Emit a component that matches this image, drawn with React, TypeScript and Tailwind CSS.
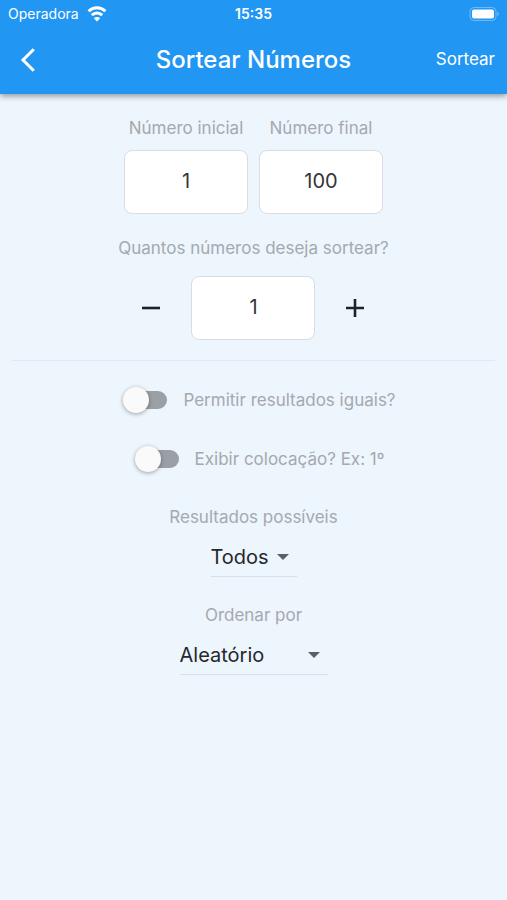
import { useState } from "react";

const labelClass = "text-[17px] leading-5 text-[#a5a9ae]";
const boxClass =
  "w-[124px] h-16 pb-0.5 rounded-lg border border-[#d9dce3] bg-white text-center text-xl text-[#333438] outline-none focus:border-[#2196f3]";

interface NumberFieldProps {
  id: string;
  label: string;
  value: string;
  onChange: (value: string) => void;
}

function NumberField({ id, label, value, onChange }: NumberFieldProps) {
  return (
    <div className="flex flex-col items-center gap-3">
      <label htmlFor={id} className={labelClass}>{label}</label>
      <input id={id} type="text" inputMode="numeric" value={value} onChange={(e) => onChange(e.target.value)} className={boxClass} />
    </div>
  );
}

interface ToggleProps {
  label: string;
  checked: boolean;
  onChange: (checked: boolean) => void;
}

function Toggle({ label, checked, onChange }: ToggleProps) {
  return (
    <label className="flex items-center gap-4 pl-4 cursor-pointer">
      <input
        type="checkbox"
        checked={checked}
        onChange={(e) => onChange(e.target.checked)}
        className="appearance-none shrink-0 w-10 h-[18px] rounded-full bg-[#9b9fa6] checked:bg-[#90caf9] before:block before:size-[26px] before:-ml-1 before:-mt-1 before:rounded-full before:bg-[#fafafa] before:shadow-[0_1px_4px_rgba(0,0,0,0.35)] checked:before:ml-[18px] checked:before:bg-[#2196f3]"
      />
      <span className={labelClass}>{label}</span>
    </label>
  );
}

interface DropdownProps {
  id: string;
  label: string;
  options: string[];
  width: string;
}

function Dropdown({ id, label, options, width }: DropdownProps) {
  return (
    <div className="flex flex-col items-center gap-2">
      <label htmlFor={id} className={labelClass}>{label}</label>
      <div className={`relative ${width}`}>
        <select id={id} className="appearance-none w-full h-[42px] pt-0.5 border-b border-[#d9dfe8] bg-transparent text-xl text-[#26282c] outline-none">
          {options.map((option) => (
            <option key={option}>{option}</option>
          ))}
        </select>
        <svg className="absolute right-2 top-[18px] w-3 h-2 pointer-events-none" viewBox="0 0 12 8">
          <path d="M0 1h12L6 7z" fill="#5b5f66" />
        </svg>
      </div>
    </div>
  );
}

function StatusBar() {
  return (
    <div className="grid grid-cols-3 items-center h-7 px-2 text-sm">
      <div className="flex items-center gap-2">
        <span>Operadora</span>
        <svg className="w-5 h-4" viewBox="0 0 20 16" fill="none" stroke="currentColor" strokeWidth="3">
          <path d="M1.600 5.200a12 12 0 0 1 16.800 0" />
          <path d="M4.800 9.200a7.500 7.500 0 0 1 10.400 0" />
          <path d="M10 15.500l-3.200-3.300a4.600 4.600 0 0 1 6.400 0z" fill="currentColor" stroke="none" />
        </svg>
      </div>
      <span className="text-center font-semibold">15:35</span>
      <svg className="justify-self-end w-[30px] h-[14px]" viewBox="0 0 30 14">
        <rect x="1" y="0.500" width="26" height="13" rx="4" fill="none" stroke="white" strokeOpacity="0.350" />
        <rect x="3" y="2.500" width="22" height="9" rx="2" fill="white" />
        <path d="M28.400 5c.8.400 1.200 1.100 1.200 2s-.400 1.600-1.200 2z" fill="white" fillOpacity="0.450" />
      </svg>
    </div>
  );
}

export default function App() {
  const [first, setFirst] = useState("1");
  const [last, setLast] = useState("100");
  const [amount, setAmount] = useState("1");
  const [allowRepeats, setAllowRepeats] = useState(false);
  const [showPlace, setShowPlace] = useState(false);

  const step = (delta: number) => setAmount(String(Math.max(1, (Number(amount) || 0) + delta)));

  return (
    <div className="min-h-screen bg-[#edf5fd] font-['Inter',sans-serif]">
      <header className="bg-[#2196f3] text-white shadow-[0_2px_6px_rgba(0,0,0,0.4)]">
        <StatusBar />
        <div className="grid grid-cols-[1fr_auto_1fr] items-center h-[66px] px-3 pb-0.5">
          <button type="button" aria-label="Voltar" className="flex items-center justify-center size-8 cursor-pointer">
            <svg className="w-4 h-6" viewBox="0 0 16 24" fill="none" stroke="currentColor" strokeWidth="3">
              <path d="M13.800 1.200L3 12l10.800 10.800" />
            </svg>
          </button>
          <h1 className="text-2xl font-medium">Sortear Números</h1>
          <button type="button" className="justify-self-end text-[17px] cursor-pointer">Sortear</button>
        </div>
      </header>

      <main className="flex flex-col items-center px-3 pt-6">
        <div className="flex gap-[11px]">
          <NumberField id="first" label="Número inicial" value={first} onChange={setFirst} />
          <NumberField id="last" label="Número final" value={last} onChange={setLast} />
        </div>

        <div className="flex flex-col items-center gap-[18px] pt-6">
          <label htmlFor="amount" className={labelClass}>Quantos números deseja sortear?</label>
          <div className="flex items-center gap-4">
            <button type="button" aria-label="Diminuir" onClick={() => step(-1)} className="flex items-center justify-center size-12 cursor-pointer">
              <svg className="size-5" viewBox="0 0 20 20" stroke="#1d2128" strokeWidth="2.600">
                <path d="M1 10h18" />
              </svg>
            </button>
            <input id="amount" type="text" inputMode="numeric" value={amount} onChange={(e) => setAmount(e.target.value)} className={boxClass} />
            <button type="button" aria-label="Aumentar" onClick={() => step(1)} className="flex items-center justify-center size-12 cursor-pointer">
              <svg className="size-5" viewBox="0 0 20 20" stroke="#1d2128" strokeWidth="2.600">
                <path d="M1 10h18M10 1v18" />
              </svg>
            </button>
          </div>
        </div>

        <hr className="w-full mt-5 border-[#e1e8f3]" />

        <div className="flex flex-col items-center gap-[39px] pt-[29px]">
          <Toggle label="Permitir resultados iguais?" checked={allowRepeats} onChange={setAllowRepeats} />
          <Toggle label="Exibir colocação? Ex: 1º" checked={showPlace} onChange={setShowPlace} />
        </div>

        <div className="flex flex-col items-center gap-7 pt-[38px]">
          <Dropdown id="results" label="Resultados possíveis" options={["Todos", "Pares", "Ímpares"]} width="w-[86px]" />
          <Dropdown id="order" label="Ordenar por" options={["Aleatório", "Crescente", "Decrescente"]} width="w-[148px]" />
        </div>
      </main>
    </div>
  );
}
